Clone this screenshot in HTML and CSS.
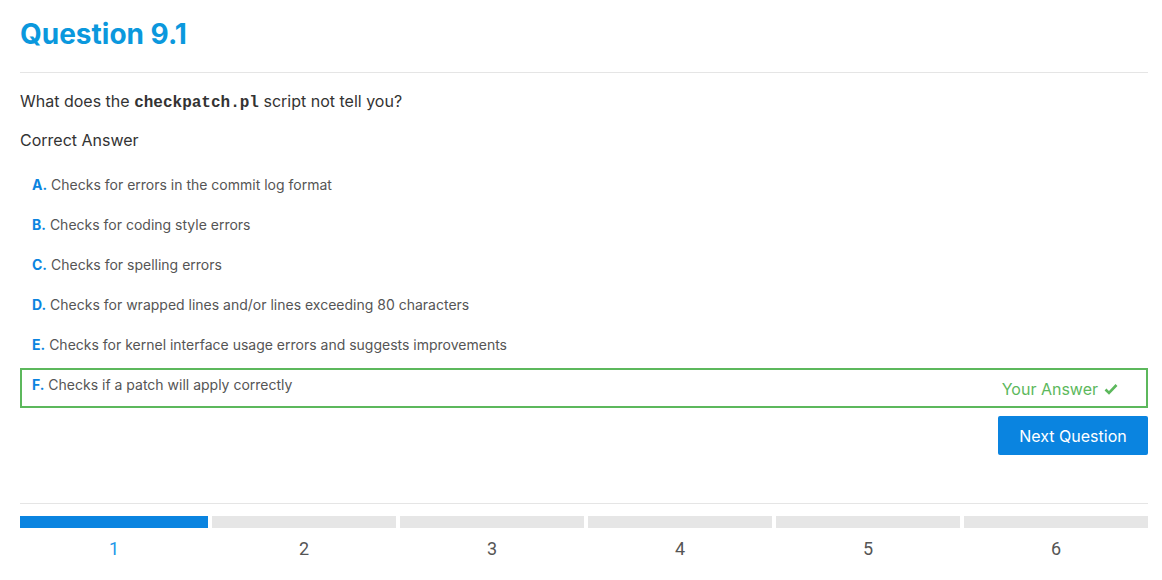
FILE: index.html
```html
<!DOCTYPE html>
<html>
<head>
<meta charset="utf-8">
<link rel="stylesheet" href="styles.css">
</head>
<body>
<div class="page">
  <h1 class="title">Question 9.1</h1>
  <hr class="rule">
  <p class="question">What does the <code>checkpatch.pl</code> script not tell you?</p>
  <p class="label">Correct Answer</p>
  <ul class="options">
    <li class="option"><span class="text"><b>A.</b> Checks for errors in the commit log format</span></li>
    <li class="option"><span class="text"><b>B.</b> Checks for coding style errors</span></li>
    <li class="option"><span class="text"><b>C.</b> Checks for spelling errors</span></li>
    <li class="option"><span class="text"><b>D.</b> Checks for wrapped lines and/or lines exceeding 80 characters</span></li>
    <li class="option"><span class="text"><b>E.</b> Checks for kernel interface usage errors and suggests improvements</span></li>
    <li class="option selected"><span class="text"><b>F.</b> Checks if a patch will apply correctly</span>
      <span class="yours">Your Answer <svg class="check" width="14" height="12" viewBox="0 0 14 12"><path d="M1.5 6.5 L5 10 L12.5 2" fill="none" stroke="currentColor" stroke-width="2.6"/></svg></span></li>
  </ul>
  <div class="actions"><button class="next">Next Question</button></div>
  <hr class="rule bottom">
  <div class="progress">
    <div class="step active"><div class="bar"></div><div class="num">1</div></div>
    <div class="step"><div class="bar"></div><div class="num">2</div></div>
    <div class="step"><div class="bar"></div><div class="num">3</div></div>
    <div class="step"><div class="bar"></div><div class="num">4</div></div>
    <div class="step"><div class="bar"></div><div class="num">5</div></div>
    <div class="step"><div class="bar"></div><div class="num">6</div></div>
  </div>
</div>
</body>
</html>
```
FILE: styles.css
```css
* { box-sizing: border-box; }
body {
  margin: 0;
  background: #fff;
  font-family: Inter, "Noto Sans", sans-serif;
  color: #333;
}
.page { padding: 0 14px 0 20px; }
.title {
  margin: 0;
  padding-top: 16px;
  font-size: 28px;
  line-height: 36px;
  font-weight: 700;
  color: #0b98dd;
}
.rule {
  border: 0;
  border-top: 1px solid #e5e5e5;
  margin: 20px 0 0;
}
.question {
  margin: 18px 0 0;
  font-size: 16px;
  line-height: 20px;
}
.question code {
  font-family: "Liberation Mono", monospace;
  font-weight: 700;
  font-size: 16px;
}
.label {
  margin: 17px 0 0;
  font-size: 16px;
  line-height: 20px;
}
.options {
  list-style: none;
  margin: 16px 0 0;
  padding: 0;
}
.option {
  display: flex;
  justify-content: space-between;
  align-items: flex-start;
  height: 40px;
  padding: 7px 10px 0;
  font-size: 14px;
  line-height: 20px;
  color: #555;
  border: 2px solid transparent;
}
.option b { color: #0a84e0; font-weight: 700; }
.option.selected { border-color: #5cb85c; margin-top: 2px; padding-top: 5px; }
.yours {
  color: #5cb85c;
  font-size: 16px;
  line-height: 20px;
  margin-top: 4px;
  margin-right: 18px;
  display: flex;
  align-items: center;
  gap: 6px;
}
.check { display: block; }
.actions {
  display: flex;
  justify-content: flex-end;
  margin-top: 8px;
}
.next {
  background: #0a84e0;
  color: #fff;
  border: 0;
  border-radius: 2px;
  font-family: Inter, sans-serif;
  font-size: 16px;
  width: 150px;
  height: 39px;
}
.rule.bottom { margin-top: 48px; }
.progress {
  display: grid;
  grid-template-columns: repeat(6, 1fr);
  margin-top: 12px;
}
.step { padding-left: 4px; }
.step:first-child { padding-left: 0; }
.bar { height: 12px; background: #e6e6e6; }
.step.active .bar { background: #0a84e0; }
.num {
  text-align: center;
  font-family: Roboto, sans-serif;
  font-size: 18px;
  line-height: 20px;
  margin-top: 11px;
  color: #555;
}
.step.active .num { color: #2196e8; }
```
